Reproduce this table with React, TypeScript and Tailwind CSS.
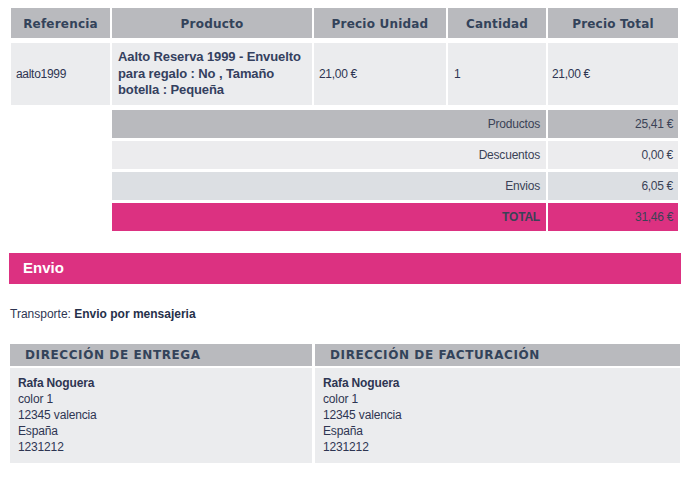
import React from "react";

const sans = { fontFamily: '"Liberation Sans", Arial, sans-serif' };
const verd = { fontFamily: '"DejaVu Sans", Verdana, sans-serif' };

function Th({ w, children }: { w: string; children: React.ReactNode }) {
  return (
    <div
      className={`${w} h-full bg-[#b9babe] flex items-center justify-center pt-[2px] text-[12px] font-bold text-[#33435a] tracking-[0.2px]`}
      style={verd}
    >
      {children}
    </div>
  );
}

function SumRow({ bg, label, value, bold }: { bg: string; label: string; value: string; bold?: boolean }) {
  return (
    <div className="flex h-[28px] gap-[2px]">
      <div className={`${bg} w-[434px] flex items-center justify-end pr-[6px] text-[12px] text-[#3a4256] tracking-[-0.2px] ${bold ? "font-bold" : ""}`}>
        {label}
      </div>
      <div className={`${bg} w-[130px] flex items-center justify-end pr-[5px] text-[12px] text-[#3a4256] tracking-[-0.3px]`}>
        {value}
      </div>
    </div>
  );
}

function Address({ w, title }: { w: string; title: string }) {
  return (
    <div className={`${w} flex flex-col gap-[2px]`}>
      <div
        className="h-[22px] bg-[#b9babe] flex items-center pl-[15px] text-[12px] font-bold text-[#33435a] tracking-[0.6px]"
        style={verd}
      >
        {title}
      </div>
      <div className="h-[95px] bg-[#ebecee] pl-[8px] pt-[7px] text-[12px] leading-[16px] text-[#2e3552] tracking-[-0.15px]">
        <div className="font-bold">Rafa Noguera</div>
        <div>color 1</div>
        <div>12345 valencia</div>
        <div>España</div>
        <div>1231212</div>
      </div>
    </div>
  );
}

export default function App() {
  return (
    <div className="w-[686px] h-[477px] bg-white relative" style={sans}>
      <div className="pl-[11px] pt-[8px]">
        <div className="flex h-[30px] gap-[2px]">
          <Th w="w-[99px]">Referencia</Th>
          <Th w="w-[200px]">Producto</Th>
          <Th w="w-[132px]">Precio Unidad</Th>
          <Th w="w-[98px]">Cantidad</Th>
          <Th w="w-[130px]">Precio Total</Th>
        </div>
        <div className="flex h-[62px] gap-[2px] mt-[5px] text-[12px] text-[#2e3552]">
          <div className="w-[99px] bg-[#ebecee] flex items-center pl-[5px] tracking-[-0.3px]">aalto1999</div>
          <div className="w-[200px] bg-[#ebecee] flex items-center pl-[6px] pr-[10px] text-[13px] font-bold leading-[16.5px] tracking-[-0.1px] text-[#34405e]">
            Aalto Reserva 1999 - Envuelto para regalo : No , Tamaño botella : Pequeña
          </div>
          <div className="w-[132px] bg-[#ebecee] flex items-center pl-[5px] tracking-[-0.3px]">21,00 €</div>
          <div className="w-[98px] bg-[#ebecee] flex items-center pl-[6px]">1</div>
          <div className="w-[130px] bg-[#ebecee] flex items-center pl-[4px] tracking-[-0.3px]">21,00 €</div>
        </div>
        <div className="flex flex-col gap-[3px] mt-[5px] ml-[101px]">
          <SumRow bg="bg-[#b9babe]" label="Productos" value="25,41 €" />
          <SumRow bg="bg-[#ececee]" label="Descuentos" value="0,00 €" />
          <SumRow bg="bg-[#dcdfe3]" label="Envios" value="6,05 €" />
          <SumRow bg="bg-[#dc3181]" label="TOTAL" value="31,46 €" bold />
        </div>
      </div>
      <div className="ml-[9px] mr-[5px] mt-[22px] h-[31px] bg-[#dc3181] flex items-center pl-[14px] text-[15px] font-bold text-white">
        Envio
      </div>
      <div className="pl-[10px] mt-[21px] text-[12px] text-[#2e3552]">
        Transporte: <span className="font-bold text-[#26304a]">Envio por mensajeria</span>
      </div>
      <div className="flex gap-[3px] pl-[10px] mt-[21px]">
        <Address w="w-[302px]" title="DIRECCIÓN DE ENTREGA" />
        <Address w="w-[365px]" title="DIRECCIÓN DE FACTURACIÓN" />
      </div>
    </div>
  );
}
